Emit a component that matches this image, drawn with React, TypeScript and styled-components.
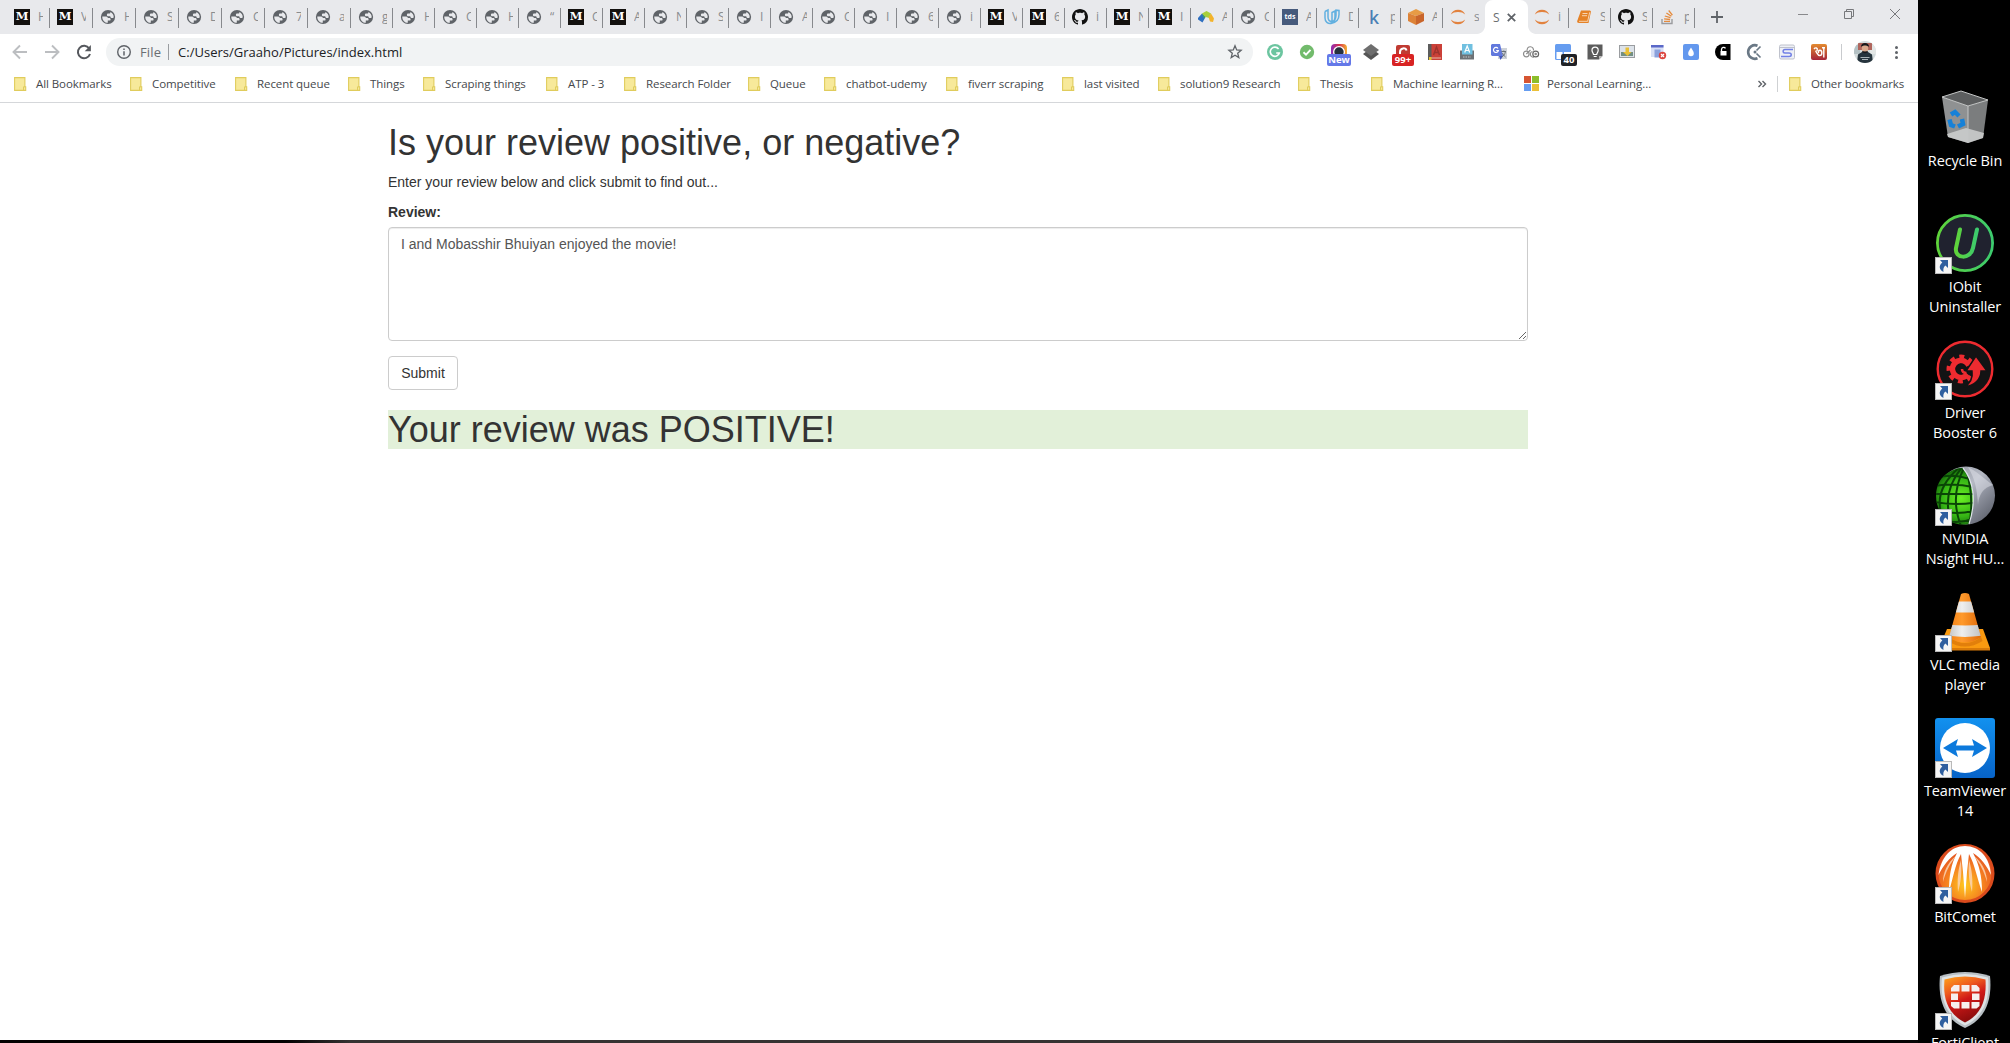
import React from "react";
import styled, { createGlobalStyle, css } from "styled-components";

const ui = `"Open Sans", "Noto Sans", sans-serif`;

const GlobalStyle = createGlobalStyle`
  * { box-sizing: border-box; }
  html, body { margin: 0; padding: 0; background: #000; overflow: hidden; }
  svg { display: block; flex: none; overflow: visible; }
`;

const Screen = styled.div`
  display: flex;
  width: 2010px;
  height: 1043px;
  overflow: hidden;
  background: #000;
`;

const LeftSide = styled.div`
  display: flex;
  flex-direction: column;
  width: 1918px;
  flex: none;
`;

const BrowserWindow = styled.div`
  display: flex;
  flex-direction: column;
  height: 1040px;
  background: #fff;
  font-family: ${ui};
`;

const TaskbarEdge = styled.div`
  height: 3px;
  background: linear-gradient(90deg, #030101 0, #030101 285px, #353232 350px, #353232 1500px, #060404 1780px);
`;

/* ---------- tab strip ---------- */

const TabStrip = styled.div`
  display: flex;
  height: 34px;
  padding-left: 7px;
  background: #e8e9ec;
`;

const Tab = styled.div<{ $width: number; $divider: boolean }>`
  display: flex;
  align-items: center;
  flex: none;
  gap: 8px;
  width: ${(p) => p.$width}px;
  height: 34px;
  padding-left: 7px;
  font-size: 12px;
  line-height: 16px;
  color: #6a6d71;
  background: linear-gradient(#87898d, #87898d) right 8px / 1px 20px no-repeat;
  ${(p) => !p.$divider && css`background: none;`}
`;

const TabTitle = styled.span`
  width: 5px;
  overflow: hidden;
  white-space: nowrap;
  opacity: 0.75;
`;

const ActiveTab = styled.div`
  display: flex;
  align-items: center;
  justify-content: space-between;
  position: relative;
  flex: none;
  width: 43px;
  margin-right: -1px;
  height: 34px;
  padding: 0 12px 0 8px;
  border-radius: 8px 8px 0 0;
  background: #fff;
  font-size: 12px;
  color: #6a6d71;
  &::before, &::after {
    content: "";
    position: absolute;
    bottom: 0;
    width: 8px;
    height: 8px;
  }
  &::before { left: -8px; background: radial-gradient(circle at 0 0, transparent 7.5px, #fff 8.2px); }
  &::after { right: -8px; background: radial-gradient(circle at 100% 0, transparent 7.5px, #fff 8.2px); }
`;

const NewTab = styled.div`
  display: flex;
  align-items: center;
  width: 26px;
  margin-left: 16px;
`;

const WindowControls = styled.div`
  display: flex;
  gap: 36px;
  margin: 9px 18px 0 auto;
`;

/* ---------- toolbar ---------- */

const Toolbar = styled.div`
  display: flex;
  align-items: center;
  height: 36px;
`;

const NavButtons = styled.div`
  display: flex;
  gap: 16px;
  padding-left: 12px;
  width: 106px;
`;

const Omnibox = styled.div`
  display: flex;
  align-items: center;
  width: 1147px;
  height: 28px;
  padding: 0 10px;
  border-radius: 14px;
  background: #f1f3f4;
  font-size: 13px;
  color: #6a6e73;
`;

const Scheme = styled.span`
  width: 28px;
  margin-left: 8px;
  white-space: nowrap;
  letter-spacing: 0.15px;
`;

const Url = styled.span`
  flex: 1;
  margin-left: 9px;
  color: #202124;
  letter-spacing: 0.02px;
`;

const Divider = styled.span<{ $color: string }>`
  flex: none;
  width: 1px;
  height: 16px;
  background: ${(p) => p.$color};
`;

const Extensions = styled.div`
  display: flex;
  margin-left: 6px;
`;

const ExtensionSlot = styled.div`
  position: relative;
  display: flex;
  align-items: center;
  justify-content: center;
  width: 32px;
  height: 28px;
`;

const Badge = styled.span<{ $bg: string; $left: number; $w: number }>`
  position: absolute;
  left: ${(p) => p.$left}px;
  top: 16px;
  width: ${(p) => p.$w}px;
  height: 12px;
  border-radius: 2px;
  background: ${(p) => p.$bg};
  color: #fff;
  font-size: 9.5px;
  font-weight: 700;
  line-height: 12px;
  text-align: center;
`;

const ToolbarEnd = styled.div`
  display: flex;
  align-items: center;
  gap: 12px;
  margin-left: 6px;
`;

const MenuDots = styled.div`
  display: flex;
  flex-direction: column;
  gap: 2px;
  margin-left: 7px;
`;

const Dot = styled.span`
  width: 3px;
  height: 3px;
  border-radius: 50%;
  background: #5f6368;
`;

/* ---------- bookmarks ---------- */

const BookmarksBar = styled.div`
  display: flex;
  align-items: center;
  height: 33px;
  padding: 0 14px 5px;
  border-bottom: 1px solid #d5d7da;
  font-size: 11.5px;
  color: #45484c;
`;

const Bookmark = styled.div<{ $pitch?: number }>`
  display: flex;
  align-items: center;
  flex: none;
  gap: 6px;
  width: ${(p) => (p.$pitch ? `${p.$pitch}px` : "auto")};
  white-space: nowrap;
  letter-spacing: -0.08px;
`;

const BookmarksEnd = styled.div`
  display: flex;
  align-items: center;
  gap: 11px;
  margin-left: auto;
  width: 146px;
`;

/* ---------- page ---------- */

const Page = styled.main`
  width: 1140px;
  margin: 0 0 0 388px;
  font: 14px/20px "Liberation Sans", Arial, sans-serif;
  color: #333;
`;

const Heading = styled.h1<{ $positive?: boolean }>`
  margin: 20px 0 10px;
  font-size: 36px;
  font-weight: 400;
  line-height: 39px;
  background: ${(p) => (p.$positive ? "#e2f0d9" : "transparent")};
`;

const Lead = styled.p`
  margin: 0 0 10px;
`;

const FieldLabel = styled.label`
  display: block;
  margin-bottom: 5px;
  font-weight: 700;
`;

const ReviewBox = styled.textarea`
  display: block;
  width: 100%;
  height: 114px;
  padding: 6px 12px;
  border: 1px solid #ccc;
  border-radius: 4px;
  box-shadow: inset 0 1px 1px rgba(0, 0, 0, 0.075);
  background: #fff;
  color: #555;
  font: inherit;
  outline: none;
`;

const SubmitButton = styled.button`
  display: block;
  width: 70px;
  height: 34px;
  margin-top: 15px;
  padding: 0;
  border: 1px solid #ccc;
  border-radius: 4px;
  background: #fff;
  color: #333;
  font: inherit;
`;

/* ---------- desktop ---------- */

const Desktop = styled.aside`
  display: flex;
  flex-direction: column;
  width: 92px;
  padding: 88px 0 0 2px;
`;

const Shortcut = styled.div`
  display: flex;
  flex-direction: column;
  align-items: center;
  flex: none;
  height: 126px;
  width: 90px;
`;

const ShortcutIcon = styled.div`
  position: relative;
  width: 60px;
  height: 60px;
`;

const ShortcutArrow = styled.span`
  position: absolute;
  left: 0;
  bottom: 0;
`;

const ShortcutLabel = styled.span`
  margin-top: 3px;
  color: #fff;
  font: 14.5px/20px ${ui};
  letter-spacing: -0.13px;
  text-align: center;
  white-space: pre;
`;

/* ---------- favicons ---------- */

const Globe = () => (
  <svg width="16" height="16" viewBox="0 0 16 16">
    <circle cx="8" cy="8" r="7.100" fill="#5f6368" />
    <path d="M2.300 7.400h3.900c1 0 1.600.8 1.600 1.700h1.500c.8 0 1.300.7 1.300 1.300 0 .8-.6 1.200-1.300 1.200H7.800v2.200C4.600 13.800 2 11 2.300 7.400z" fill="#e8e9ec" />
    <path d="M13.700 8.300c-.5 1-1.300.8-2.300.7-.8-.1-1-.9-1.200-1.700H8.300c-.8 0-1.400-.6-1.400-1.400 0-.8.6-1.300 1.400-1.300h.9c.8 0 1.200-.6 1.200-1.700 2.200 1 3.500 3.100 3.300 5.400z" fill="#e8e9ec" />
  </svg>
);

const LetterMark = styled.span<{ $bg: string; $size: number; $serif?: boolean }>`
  display: block;
  flex: none;
  width: 16px;
  height: 16px;
  background: ${(p) => p.$bg};
  color: #fff;
  font: 700 ${(p) => p.$size}px/15.5px ${(p) => (p.$serif ? `"DejaVu Serif", serif` : ui)};
  text-align: center;
`;

const KaggleMark = styled.span`
  flex: none;
  width: 16px;
  color: #4a7fb5;
  text-align: center;
  font: 500 18px/16px "Noto Sans", sans-serif;
`;

const GitHub = () => (
  <svg width="16" height="16" viewBox="0 0 16 16" fill="#111">
    <path d="M8 0C3.580 0 0 3.580 0 8c0 3.540 2.290 6.530 5.470 7.590.4.070.55-.17.55-.38 0-.19-.010-.82-.010-1.490-2.010.37-2.530-.49-2.690-.94-.09-.23-.48-.94-.82-1.130-.28-.15-.68-.52-.010-.53.63-.010 1.080.58 1.230.82.72 1.210 1.870.87 2.330.66.070-.52.28-.87.51-1.070-1.780-.2-3.640-.89-3.640-3.950 0-.87.31-1.590.82-2.150-.080-.2-.36-1.020.080-2.120 0 0 .67-.21 2.200.82.64-.18 1.320-.27 2-.27s1.360.09 2 .27c1.530-1.040 2.200-.82 2.200-.82.44 1.100.16 1.920.080 2.120.51.56.82 1.270.82 2.150 0 3.070-1.870 3.750-3.650 3.950.29.25.54.73.54 1.480 0 1.070-.010 1.930-.010 2.200 0 .21.15.46.55.38A8.010 8.010 0 0 0 16 8c0-4.420-3.580-8-8-8z" />
  </svg>
);

const Analytics = () => (
  <svg width="16" height="16" viewBox="0 0 16 16">
    <path d="M0 9 4 4.500 7.500 8 4.500 13.500 0 10.500z" fill="#2e6fc0" />
    <path d="M4 4.500 8.500 2 13 4.500 11.500 9 7.500 8z" fill="#a9cf3a" />
    <path d="M13 4.500 16 9.500 15 13l-3-.5L10.500 8z" fill="#f3b32b" />
    <path d="M4 4.500 7.500 8 6 9.500z" fill="#45a35a" />
  </svg>
);

const Udacity = () => (
  <svg width="16" height="16" viewBox="0 0 16 16" fill="none" stroke="#62b0e0" strokeWidth="1.500">
    <path d="M1 2.500 4 1v7c0 3 2 4.500 4 4.500M1 2.500V9c0 4 3 6 6 5.500 5-.8 8-4 8-9V1.500l-3-.3V6c0 4-2 7-5.500 8M8 3.500 11 2v5.500c0 3-1.500 5-3 5z" />
  </svg>
);

const AwsCube = () => (
  <svg width="16" height="16" viewBox="0 0 16 16">
    <path d="M0 4 8 0l8 4-8 3z" fill="#e79b45" />
    <path d="M0 4l8 3v9l-8-4z" fill="#dd8338" />
    <path d="M16 4 8 7v9l8-4z" fill="#c9652b" />
  </svg>
);

const Jupyter = () => (
  <svg width="16" height="16" viewBox="0 0 16 16" fill="#e2823e">
    <path d="M.8 5.500C2 2.500 4.500.8 8 .8s6 1.700 7.200 4.700C13.500 3.800 11 3 8 3S2.500 3.800.8 5.500zM.8 10.500C2 13.500 4.500 15.200 8 15.200s6-1.700 7.200-4.700C13.500 12.200 11 13 8 13s-5.500-.8-7.200-2.500z" />
  </svg>
);

const Book = () => (
  <svg width="16" height="16" viewBox="0 0 16 16">
    <path d="M5 1.500h9l1 1-2.500 11.500H3c-1.500 0-2-1-1.800-2z" fill="#e58227" />
    <path d="M6.500 4.500h5M6 6.700h5M3 12.300h8.700l2-9" fill="none" stroke="#f8dcc0" strokeWidth=".9" />
  </svg>
);

const StackOverflow = () => (
  <svg width="16" height="16" viewBox="0 0 16 16" fill="none">
    <path d="M2 10v4.500h10V10" stroke="#9a9b9e" strokeWidth="1.400" />
    <path d="M4 12.300h6M4.100 9.900l6 .6M4.800 7l5.700 1.700M6.400 4l5 3.200M8.700 1.500l3.700 4.600" stroke="#e58a3c" strokeWidth="1.300" />
  </svg>
);

const favicon: Record<string, React.ReactNode> = {
  g: <Globe />,
  m: <LetterMark $bg="#12100e" $size={11.5} $serif>M</LetterMark>,
  gh: <GitHub />,
  av: <Analytics />,
  tds: <LetterMark $bg="#465a7c" $size={7}>tds</LetterMark>,
  u: <Udacity />,
  k: <KaggleMark>k</KaggleMark>,
  aws: <AwsCube />,
  j: <Jupyter />,
  b: <Book />,
  so: <StackOverflow />,
};

const tabs: [string, string][] = [
  ["m", "H"], ["m", "V"], ["g", "H"], ["g", "S"], ["g", "D"], ["g", "C"], ["g", "7"], ["g", "a"],
  ["g", "g"], ["g", "H"], ["g", "C"], ["g", "H"], ["g", "“"], ["m", "C"], ["m", "A"], ["g", "N"],
  ["g", "S"], ["g", "I"], ["g", "A"], ["g", "C"], ["g", "I"], ["g", "6"], ["g", "i"], ["m", "V"],
  ["m", "6"], ["gh", "i"], ["m", "N"], ["m", "I"], ["av", "A"], ["g", "C"], ["tds", "A"], ["u", "D"],
  ["k", "p"], ["aws", "A"], ["j", "s"],
];
const trailingTabs: [string, string][] = [["j", "i"], ["b", "S"], ["gh", "S"], ["so", "p"]];

/* ---------- extension icons ---------- */

const Ext = ({ children }: { children: React.ReactNode }) => (
  <svg width="16" height="16" viewBox="0 0 16 16">{children}</svg>
);

const extensions: React.ReactNode[] = [
  <Ext>
    <circle cx="8" cy="8" r="8" fill="#6cc5a0" />
    <path d="M11.600 5A4.600 4.600 0 1 0 12.300 9H9.200" fill="none" stroke="#fff" strokeWidth="1.600" />
  </Ext>,
  <Ext>
    <circle cx="8" cy="8" r="7.200" fill="#72bb6c" />
    <path d="M4.500 8.200 7 10.600l4.500-4.800" fill="none" stroke="#fff" strokeWidth="1.900" />
  </Ext>,
  <>
    <Ext>
      <defs>
        <linearGradient id="cam" x1="0" x2="1" y1="0" y2="0">
          <stop offset="0" stopColor="#8b2fb8" /><stop offset=".5" stopColor="#d8304f" /><stop offset="1" stopColor="#f0b030" />
        </linearGradient>
      </defs>
      <rect width="16" height="16" rx="4" fill="url(#cam)" />
      <circle cx="8" cy="8" r="6" fill="#fff" /><circle cx="8" cy="8" r="4.700" fill="#26303c" />
    </Ext>
    <Badge $bg="#6478e8" $left={4} $w={24}>New</Badge>
  </>,
  <Ext>
    <path d="M0 10 8 4l8 6-8 6z" fill="#555" /><path d="M0 6 8 0l8 6-8 6z" fill="#6e6e6e" />
  </Ext>,
  <>
    <Ext>
      <rect x="1" y="1" width="14" height="14" rx="2" fill="#c03a32" />
      <path d="M5 10V8c0-4 6-5 6.500-1.500" fill="none" stroke="#fff" strokeWidth="2" />
    </Ext>
    <Badge $bg="#d82323" $left={5} $w={22}>99+</Badge>
  </>,
  <Ext>
    <rect x="1" y="0" width="14" height="16" fill="#cb4038" /><rect x="1" width="3.500" height="16" fill="#5c5c5c" />
    <path d="M6.500 11 9.500 3l3 8M7.500 8.500h4" fill="none" stroke="#9c332e" strokeWidth="1.400" />
    <path d="M2 14h12" stroke="#e7b9a9" /><rect x="2" y="13" width="2.500" height="3" fill="#e8c42f" />
  </Ext>,
  <Ext>
    <path d="M1 6.500h14V15.500H1z" fill="#6d7276" /><rect x="3" y="0" width="10.500" height="10.500" fill="#70c0e0" />
    <path d="M5.700 8.500 8.200 2l2.500 6.500M6.700 6.500h3" fill="none" stroke="#fff" strokeWidth="1.200" />
    <path d="M4 13h8" stroke="#c5c8ca" strokeDasharray="1.500 1" />
  </Ext>,
  <Ext>
    <rect x="7" y="4" width="9" height="11" fill="#cfd3d9" /><path d="M1 0h8l3 12H1l-1-1V1z" fill="#6279dd" />
    <path d="M8 12h4l-2.500 4z" fill="#4358bd" />
    <path d="M7 4.500A2.500 2.500 0 1 0 7.400 6.500H5.200" fill="none" stroke="#fff" strokeWidth="1.200" />
    <path d="M10.500 7.500H15M12.800 6.500v1M11 13c1.500-1 3-3 3.300-5M11.500 9c.5 1.500 1.500 3 3 4" fill="none" stroke="#687077" />
  </Ext>,
  <Ext>
    <g fill="none" stroke="#8d8d8d" strokeWidth="1.200">
      <circle cx="3.300" cy="10" r="2.800" /><path d="M4 6.500C4.500 1 11 2 10.500 6.500M11 13C7 14 6 8 9.500 7.500" /><circle cx="12.700" cy="10" r="2.900" stroke="#666" /><circle cx="12.700" cy="10" r=".7" /><path d="M3.300 10 7.500 6" />
    </g>
  </Ext>,
  <>
    <Ext>
      <rect x="0" y="0" width="16" height="16" rx="1.500" fill="#669df0" /><path d="M1.500 8h6v7h-6zM9 8h7v8H9z" fill="#fff" />
    </Ext>
    <Badge $bg="#202226" $left={14} $w={16}>40</Badge>
  </>,
  <Ext>
    <path d="M.5 .5h15v11.500l-3.500 3.500H.5z" fill="#5c5c5c" /><path d="M12 15.500V12h3.500z" fill="#bbb" />
    <path d="M6.500 10.500C6.500 9 5 8.500 5 6.300a3.100 3.100 0 0 1 6.200 0c0 2.200-1.500 2.700-1.500 4.200zM6.700 12.500h3" fill="none" stroke="#fff" strokeWidth="1.200" />
  </Ext>,
  <Ext>
    <rect x=".5" y="1.500" width="15" height="12" fill="#dde3ea" stroke="#9a9da0" /><rect x="2" y="8" width="12" height="4" fill="#728f83" />
    <path d="M6.500 3.500h3.500v4.500H12.500l-4 4L4 8h2.500z" fill="#e9bf35" />
  </Ext>,
  <Ext>
    <rect x="0" y="1" width="12.500" height="12" fill="#d8e0f6" /><rect y="1" width="12.500" height="2.500" fill="#5a68c8" />
    <path d="M3.500 5.500h6v8h-6z" fill="#8aa1dc" /><circle cx="11.500" cy="11.500" r="3.700" fill="#dc4640" />
    <path d="M10 10l3 3M13 10l-3 3" stroke="#fff" strokeWidth="1.200" />
  </Ext>,
  <Ext>
    <rect width="16" height="16" rx="2" fill="#6398ee" /><path d="M8 3.500c1.500 2.500 2.800 4 2.800 6a2.800 2.800 0 0 1-5.600 0c0-2 1.300-3.500 2.800-6z" fill="#fff" />
  </Ext>,
  <Ext>
    <path d="M15.500 0V16H8A8 8 0 0 1 8 0z" fill="#000" /><rect x="5.500" y="7" width="6" height="4.500" fill="#fff" />
    <path d="M6.500 7V5.500a2.200 2.200 0 0 1 4-1.200" fill="none" stroke="#fff" strokeWidth="1.300" />
  </Ext>,
  <Ext>
    <path d="M10.500 1.700A6.800 6.800 0 1 0 10.500 14.300" fill="none" stroke="#6a7885" strokeWidth="2.600" />
    <path d="M9.500 6.500 13.500 2.500M9.500 9.500l4 4" stroke="#6a7885" strokeWidth="1.700" /><circle cx="8" cy="8" r="1.500" fill="#6a7885" />
  </Ext>,
  <Ext>
    <rect x=".5" y="1" width="15" height="14" rx="1.500" fill="#eef0f6" stroke="#bfc2cc" />
    <path d="M1 3.500h14" stroke="#bfc2cc" /><path d="M14 5.500H6c-2.500 0-2.500 3.500 0 3.500h4c3 0 3 3.500 0 3.500H2" fill="none" stroke="#7280e6" strokeWidth="1.500" />
  </Ext>,
  <Ext>
    <defs>
      <linearGradient id="bn" x1="0" x2="0" y1="0" y2="1"><stop offset="0" stopColor="#e38b2f" /><stop offset="1" stopColor="#a5243a" /></linearGradient>
    </defs>
    <rect width="16" height="16" rx="2" fill="url(#bn)" />
    <path d="M3 5C4.500 3 7 4 6.200 6.200c-.4 1-1.400 1.200-2 1.200C6 7.400 6 11.500 8.700 11.500c2.800 0 2.800-5 .3-5.300-1.700 0-2.200 1.800-1 2.600M12.800 3v10.500M11 3.700h3" fill="none" stroke="#fff" strokeWidth="1.400" />
  </Ext>,
];

const Avatar = () => (
  <svg width="22" height="22" viewBox="0 0 22 22">
    <clipPath id="av"><circle cx="11" cy="11" r="11" /></clipPath>
    <g clipPath="url(#av)">
      <rect width="22" height="22" fill="#d3dbdc" />
      <path d="M0 4h6v9H0z" fill="#b4c1c4" /><path d="M16 4h6v9h-6z" fill="#e3e7e6" />
      <path d="M4 2h14v7H4z" fill="#b0655c" />
      <path d="M3 22 4 13.500l4-2.500h6l4 2.500 1 8.500z" fill="#26343d" />
      <ellipse cx="11" cy="7.500" rx="3.200" ry="4.100" fill="#d9a98c" />
      <path d="M7 6C6.500 .5 15.500.5 15 6c-2-2-6-2-8 0zM8 10c2 .5 4 .5 6 0-.5 3-5.500 3-6 0z" fill="#17191c" />
      <path d="M6.500 16.500h9M8 18.500h6" stroke="#aab4b8" strokeWidth="1.200" />
    </g>
  </svg>
);

const Folder = () => (
  <svg width="16" height="16" viewBox="0 0 16 16">
    <path d="M.6 1.600h10.300v9.200h.8v3.600H.6z" fill="#f7e99a" stroke="#e0cc5c" strokeWidth="1.100" />
    <path d="M9.500 14.200v-3.400h1.600" fill="none" stroke="#e0cc5c" strokeWidth="1" />
  </svg>
);

const Microsoft = () => (
  <svg width="18" height="16" viewBox="0 0 18 16">
    <path d="M1 0h7v7H1z" fill="#d65532" /><path d="M9 0h7v7H9z" fill="#8cbd2c" />
    <path d="M1 8h7v7H1z" fill="#669df0" /><path d="M9 8h7v7H9z" fill="#ebc038" />
  </svg>
);

const bookmarks: [string, number][] = [
  ["All Bookmarks", 116], ["Competitive", 105], ["Recent queue", 113], ["Things", 75],
  ["Scraping things", 123], ["ATP - 3", 78], ["Research Folder", 124], ["Queue", 76],
  ["chatbot-udemy", 122], ["fiverr scraping", 116], ["last visited", 96],
  ["solution9 Research", 140], ["Thesis", 73], ["Machine learning R...", 152],
];

/* ---------- desktop icons ---------- */

const Arrow = () => (
  <svg width="17" height="17" viewBox="0 0 17 17">
    <rect x=".5" y=".5" width="16" height="16" fill="#f5f5f5" stroke="#b9b9b9" />
    <path d="M5 3h8v8l-2.600-2.500C8.500 10 8 12 8.500 15 4 12.500 3.500 8.500 7.300 5.400z" fill="#2f5f9f" />
  </svg>
);

const Big = ({ children }: { children: React.ReactNode }) => (
  <svg width="60" height="60" viewBox="0 0 60 60">{children}</svg>
);

const RecycleBin = () => (
  <Big>
    <path d="M7 9 26 3l27 9-20 6z" fill="#5c5e5f" />
    <path d="M7 9l26 9v37l-20-6z" fill="#8f9192" /><path d="M53 12 33 18v37l15-5z" fill="#7b7d7e" />
    <path d="M12 46l19-6 18 5-1 5-15 5-20-6z" fill="#cfd0d0" opacity=".85" />
    <path d="M7 9 26 3l27 9-20 6zM33 18v37" fill="none" stroke="#c4c6c6" strokeWidth="1" />
    <g fill="none" stroke="#1681d8" strokeWidth="4.500">
      <path d="M16 26.500 20 24l4 4" /><path d="M14.500 31.500 16 37l4 1.500" /><path d="M27 31l1 5-5 2.500" />
    </g>
  </Big>
);

const IObit = () => (
  <Big>
    <defs><linearGradient id="io"><stop offset="0" stopColor="#5fd33a" /><stop offset="1" stopColor="#3ccb6e" /></linearGradient></defs>
    <circle cx="30" cy="29" r="27.600" fill="#20222f" stroke="url(#io)" strokeWidth="2.800" />
    <path d="M25 15.500 21 34c-1.800 11 14.500 12 17 0L42 15.500" fill="none" stroke="url(#io)" strokeWidth="4" strokeLinecap="round" />
  </Big>
);

const DriverBooster = () => (
  <Big>
    <circle cx="30" cy="29" r="27.300" fill="#131314" stroke="#ee2b30" strokeWidth="2.400" />
    <circle cx="26" cy="29" r="8.500" fill="none" stroke="#ee2b30" strokeWidth="5.500" strokeDasharray="44 12" transform="rotate(38 26 29)" />
    <circle cx="26" cy="29" r="12.500" fill="none" stroke="#ee2b30" strokeWidth="4" strokeDasharray="5 4.800" strokeDashoffset="2" />
    <circle cx="26" cy="29" r="4.800" fill="#131314" stroke="#131314" />
    <path d="M41 16 52 31h-6c0 8-6 15-17 16 7-4 9-9 8-16h-6z" fill="#ee2b30" stroke="#131314" strokeWidth="1.500" />
    <path d="M27 29c0 3 2 4 4.500 4" fill="none" stroke="#ee2b30" strokeWidth="2.500" />
  </Big>
);

const Nsight = () => (
  <Big>
    <defs>
      <linearGradient id="nv" x1="0" y1="0" x2="1" y2="1"><stop offset="0" stopColor="#8a8e98" /><stop offset=".45" stopColor="#b5b9c4" /><stop offset=".65" stopColor="#8b8f9b" /><stop offset="1" stopColor="#50545e" /></linearGradient>
      <radialGradient id="gr"><stop offset="0" stopColor="#6bf024" /><stop offset=".6" stopColor="#36b515" /><stop offset="1" stopColor="#0f5c08" /></radialGradient>
      <clipPath id="nc"><path d="M28 2C38 14 42 34 34 58 14 62 1 46 1 30 1 14 12 3 28 2z" /></clipPath>
    </defs>
    <circle cx="31" cy="29.500" r="29" fill="url(#nv)" />
    <path d="M33 1c14 8 16 12 25 18-10 3-14 9-15 20-1-16-3-26-10-38z" fill="#e2e4ec" opacity=".5" />
    <g clipPath="url(#nc)">
      <circle cx="26" cy="32" r="31" fill="url(#gr)" />
      <path d="M0 12q20-6 42 4M0 20q20-4 42 2M0 28h44M0 36q22 4 44 0M0 44q22 6 42 0M0 52q22 8 40 0M28 0Q4 28 18 60M30 0Q14 30 26 60M26 0Q-8 28 12 60M30 0q10 30 4 60" fill="none" stroke="#0a4506" strokeWidth="2" />
    </g>
    <path d="M28 2C38 14 42 34 34 58" fill="none" stroke="#dfe2ea" strokeWidth="1.200" />
  </Big>
);

const Vlc = () => (
  <Big>
    <defs>
      <linearGradient id="vc"><stop offset=".2" stopColor="#ee7a12" /><stop offset=".45" stopColor="#ff9a2c" /><stop offset=".8" stopColor="#dc6406" /></linearGradient>
      <linearGradient id="vw"><stop offset=".2" stopColor="#bfc0c2" /><stop offset=".45" stopColor="#efefef" /><stop offset=".8" stopColor="#bcbdbf" /></linearGradient>
      <clipPath id="cone"><path d="M26 2q4-2 8 0l12 43q-16 11-32 0z" /></clipPath>
    </defs>
    <path d="M12 37h36l7 19v2H4v-2z" fill="#fa9a10" /><path d="M4 56h51v2.500H4z" fill="#d97a08" />
    <path d="M14 45q16 12 32 0l1.500 4q-17.500 11-35 0z" fill="#c96405" opacity=".5" />
    <g clipPath="url(#cone)">
      <path d="M0 0h60v60H0z" fill="url(#vc)" />
      <path d="M0 8.500q30 2 60 0v9q-30 6-60 0zM0 31q30 5 60 0v10q-30 8-60 0z" fill="url(#vw)" />
    </g>
  </Big>
);

const TeamViewer = () => (
  <Big>
    <defs><linearGradient id="tv" x1="0" y1="0" x2="0" y2="1"><stop offset="0" stopColor="#1291ef" /><stop offset="1" stopColor="#0763c8" /></linearGradient></defs>
    <rect width="60" height="60" rx="3" fill="url(#tv)" /><circle cx="30" cy="30" r="25" fill="#fff" />
    <path d="M8 30 23 21l-2 6.500h18L37 21l15 9-15 9 2-6.500H21l2 6.500z" fill="#0c79dc" />
  </Big>
);

const BitComet = () => (
  <Big>
    <defs><radialGradient id="bc" cx=".5" cy=".7" r=".6"><stop offset="0" stopColor="#ffc91f" /><stop offset=".6" stopColor="#f47b20" /><stop offset="1" stopColor="#e35322" /></radialGradient></defs>
    <circle cx="30" cy="29.500" r="28" fill="url(#bc)" stroke="#da4b1d" strokeWidth="3" />
    <path d="M30 2C16 2 6 13 3.500 31 8 22 14 14 22 9 16 20 14 32 14 48c4-14 6-27 12-38l2 18 2 26 2-26 2-18c6 11 8 24 13 38 0-16-3-28-9-39 8 5 14 13 18 22C55 13 44 2 30 2z" fill="#fff" />
    <path d="M21 12c-6 8-10 15-13 26 0-9 4-19 13-26zM39 12c6 8 10 15 13 26 0-9-4-19-13-26zM26 16c-3 10-4 20-3 32 3-10 4-20 3-32zM34 16c3 10 4 20 3 32-3-10-4-20-3-32z" fill="#fbd3b3" opacity=".85" />
  </Big>
);

const Forti = () => (
  <Big>
    <defs>
      <linearGradient id="fc" x1="0" y1="0" x2=".4" y2="1"><stop offset="0" stopColor="#ffa51c" /><stop offset=".35" stopColor="#ee5a1e" /><stop offset=".6" stopColor="#cf1818" /><stop offset="1" stopColor="#8f0d0d" /></linearGradient>
    </defs>
    <path d="M5 6q25-8 50 0c2 20-2 42-25 52C7 48 3 26 5 6z" fill="#b8bfc4" />
    <path d="M7 7.500q23-7 46 0c2 18-2 38-23 48C9 45 5 25 7 7.500z" fill="#dfe3e5" />
    <path d="M9.500 9.500q20.500-6 41 0c1 17-2 34-20.500 43C11 43 8 26 9.500 9.500z" fill="url(#fc)" />
    <path d="M19 15h5.500v6.500H16V18zM26.500 15h8v6.500h-8zM36.500 15h5l3 3v3.500h-8zM16 23.500h7V30h-7zM37 23.500h7.500V30H37zM16 32h8.500v6.500H19L16 36zM26.500 32h8v6.500h-8zM36.500 32h8v4l-3 2.500h-5z" fill="#f6efee" />
  </Big>
);

const shortcuts: { label: string; icon: React.ReactNode; arrow: boolean }[] = [
  { label: "Recycle Bin", icon: <RecycleBin />, arrow: false },
  { label: "IObit\nUninstaller", icon: <IObit />, arrow: true },
  { label: "Driver\nBooster 6", icon: <DriverBooster />, arrow: true },
  { label: "NVIDIA\nNsight HU...", icon: <Nsight />, arrow: true },
  { label: "VLC media\nplayer", icon: <Vlc />, arrow: true },
  { label: "TeamViewer\n14", icon: <TeamViewer />, arrow: true },
  { label: "BitComet", icon: <BitComet />, arrow: true },
  { label: "FortiClient", icon: <Forti />, arrow: true },
];

export default function App() {
  return (
    <Screen>
      <GlobalStyle />
      <LeftSide>
        <BrowserWindow>
          <TabStrip>
            {tabs.map(([icon, title], i) => (
              <Tab key={i} $width={i < 8 ? 43 : 42} $divider={i < tabs.length - 1}>
                {favicon[icon]}
                <TabTitle>{title}</TabTitle>
              </Tab>
            ))}
            <ActiveTab>
              <span>S</span>
              <svg width="9" height="9" viewBox="0 0 9 9">
                <path d="M.8.8l7.400 7.400M8.200.8.8 8.200" stroke="#5f6368" strokeWidth="1.800" />
              </svg>
            </ActiveTab>
            {trailingTabs.map(([icon, title], i) => (
              <Tab key={i} $width={42} $divider>
                {favicon[icon]}
                <TabTitle>{title}</TabTitle>
              </Tab>
            ))}
            <NewTab>
              <svg width="12" height="12" viewBox="0 0 12 12">
                <path d="M6 0v12M0 6h12" stroke="#5f6368" strokeWidth="1.800" />
              </svg>
            </NewTab>
            <WindowControls>
              <svg width="10" height="10" viewBox="0 0 10 10"><path d="M0 5.500h10" stroke="#88898c" /></svg>
              <svg width="10" height="10" viewBox="0 0 10 10">
                <path d="M.5 2.500h7v7h-7zM2.500 2.500v-2h7v7h-2" fill="none" stroke="#77787b" />
              </svg>
              <svg width="10" height="10" viewBox="0 0 10 10"><path d="M0 0l10 10M10 0 0 10" stroke="#77787b" /></svg>
            </WindowControls>
          </TabStrip>

          <Toolbar>
            <NavButtons>
              <svg width="16" height="16" viewBox="0 0 16 16"><path d="M15 8H2M8 1.500 1.500 8 8 14.500" fill="none" stroke="#bcbec1" strokeWidth="1.900" /></svg>
              <svg width="16" height="16" viewBox="0 0 16 16"><path d="M1 8h13M8 1.500 14.500 8 8 14.500" fill="none" stroke="#bcbec1" strokeWidth="1.900" /></svg>
              <svg width="16" height="16" viewBox="0 0 16 16">
                <path d="M13.200 4.500A6.200 6.200 0 1 0 14 10" fill="none" stroke="#55585d" strokeWidth="2" />
                <path d="M14.900 1v6.200H8.700z" fill="#55585d" />
              </svg>
            </NavButtons>
            <Omnibox>
              <svg width="16" height="16" viewBox="0 0 16 16">
                <circle cx="8" cy="8" r="6.300" fill="none" stroke="#5f6368" strokeWidth="1.400" />
                <path d="M8 7.200v4.300M8 4.400v1.600" stroke="#5f6368" strokeWidth="1.500" />
              </svg>
              <Scheme>File</Scheme>
              <Divider $color="#9a9da1" />
              <Url>C:/Users/Graaho/Pictures/index.html</Url>
              <svg width="16" height="16" viewBox="0 0 16 16">
                <path d="M8 1.800 9.700 6l4.400.3-3.400 2.900 1.100 4.400L8 11.200l-3.800 2.400 1.100-4.400L1.900 6.300 6.300 6z" fill="none" stroke="#5f6368" strokeWidth="1.300" />
              </svg>
            </Omnibox>
            <Extensions>
              {extensions.map((icon, i) => (
                <ExtensionSlot key={i}>{icon}</ExtensionSlot>
              ))}
            </Extensions>
            <ToolbarEnd>
              <Divider $color="#c9cbce" />
              <Avatar />
              <MenuDots><Dot /><Dot /><Dot /></MenuDots>
            </ToolbarEnd>
          </Toolbar>

          <BookmarksBar>
            {bookmarks.map(([label, pitch]) => (
              <Bookmark key={label} $pitch={pitch}>
                <Folder />
                {label}
              </Bookmark>
            ))}
            <Bookmark>
              <Microsoft />
              Personal Learning...
            </Bookmark>
            <BookmarksEnd>
              <svg width="8" height="8" viewBox="0 0 8 8">
                <path d="M.5 1l3 3-3 3M4.500 1l3 3-3 3" fill="none" stroke="#5f6368" strokeWidth="1.400" />
              </svg>
              <Divider $color="#cfd1d3" />
              <Bookmark>
                <Folder />
                Other bookmarks
              </Bookmark>
            </BookmarksEnd>
          </BookmarksBar>

          <Page>
            <Heading>Is your review positive, or negative?</Heading>
            <Lead>Enter your review below and click submit to find out...</Lead>
            <FieldLabel>Review:</FieldLabel>
            <ReviewBox spellCheck={false} defaultValue="I and Mobasshir Bhuiyan enjoyed the movie!" />
            <SubmitButton>Submit</SubmitButton>
            <Heading $positive>Your review was POSITIVE!</Heading>
          </Page>
        </BrowserWindow>
        <TaskbarEdge />
      </LeftSide>

      <Desktop>
        {shortcuts.map((s) => (
          <Shortcut key={s.label}>
            <ShortcutIcon>
              {s.icon}
              {s.arrow && <ShortcutArrow><Arrow /></ShortcutArrow>}
            </ShortcutIcon>
            <ShortcutLabel>{s.label}</ShortcutLabel>
          </Shortcut>
        ))}
      </Desktop>
    </Screen>
  );
}
